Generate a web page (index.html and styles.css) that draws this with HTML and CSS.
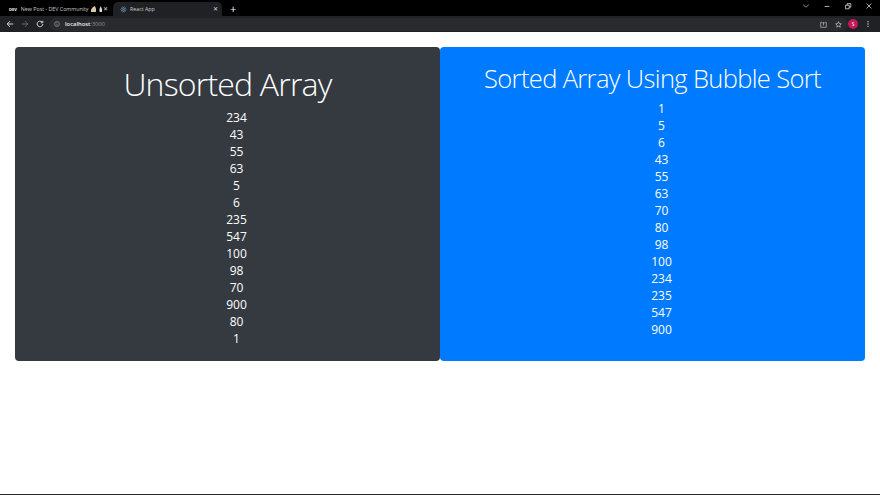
FILE: index.html
```html
<!DOCTYPE html>
<html>

<head>
  <title>React App</title>
  <meta charset="utf-8" />
  <link rel="stylesheet" href="styles.css">
</head>

<body>
<div class="tabstrip">
  <div class="tab">
    <span class="devlogo">DEV</span>
    <span class="tab-title">New Post - DEV Community</span>
    <svg class="emoji" viewBox="0 0 12 6"><path d="M0 6V3.5L2 1 4 0 5 3V6Z" fill="#d8c9a8" /><path d="M8.5 6V3L9.6 0 11 3V6Z" fill="#ddd" /></svg>
    <span class="tab-close">✕</span>
  </div>
  <div class="tab active">
    <svg class="favicon" viewBox="0 0 16 16" fill="none" stroke="#5f8fb0" stroke-width="1">
      <circle cx="8" cy="8" r="1.3" fill="#5f8fb0" stroke="none" />
      <ellipse cx="8" cy="8" rx="7" ry="2.8" />
      <ellipse cx="8" cy="8" rx="7" ry="2.8" transform="rotate(60 8 8)" />
      <ellipse cx="8" cy="8" rx="7" ry="2.8" transform="rotate(120 8 8)" />
    </svg>
    <span class="tab-title">React App</span>
    <span class="tab-close">✕</span>
  </div>
  <span class="newtab">+</span>
  <div class="window-btns">
    <svg viewBox="0 0 10 10" fill="none" stroke="#aaa"><path d="M1.5 3.5 5 6.5 8.5 3.5" /></svg>
    <svg viewBox="0 0 10 10" fill="none" stroke="#ddd"><path d="M2 5.5H8" /></svg>
    <svg viewBox="0 0 10 10" fill="none" stroke="#ddd"><path d="M2 4H6.5V8.5H2ZM4 4V2H8.5V6.5H6.5" /></svg>
    <svg viewBox="0 0 10 10" fill="none" stroke="#ddd"><path d="M2 2 8 8M8 2 2 8" /></svg>
  </div>
</div>

<div class="toolbar">
  <svg class="nav" viewBox="0 0 10 10" fill="none" stroke="#ddd" stroke-width="1.2"><path d="M9 5H1.5M5 1.5 1.5 5 5 8.5" /></svg>
  <svg class="nav" viewBox="0 0 10 10" fill="none" stroke="#6a6b6e" stroke-width="1.2"><path d="M1 5H8.5M5 1.5 8.5 5 5 8.5" /></svg>
  <svg class="nav" viewBox="0 0 10 10" fill="none" stroke="#ddd" stroke-width="1.2"><path d="M8.5 5A3.5 3.5 0 1 1 7.4 2.4M8.5 1V3.4H6" /></svg>
  <div class="omnibox">
    <svg class="info" viewBox="0 0 10 10" fill="none" stroke="#ccc" stroke-width=".8"><circle cx="5" cy="5" r="4" /><path d="M5 4.4V7.4M5 2.6V3.5" /></svg>
    <span class="host">localhost</span><span class="port">:3000</span>
    <svg class="omni-icon share" viewBox="0 0 10 10" fill="none" stroke="#ccc" stroke-width=".9"><path d="M3 2H1V9H9V2H7M5 6.5V2M3.5 3.4 5 1.6 6.5 3.4" /></svg>
    <svg class="omni-icon" viewBox="0 0 10 10" fill="none" stroke="#ddd" stroke-width=".9"><path d="M5 1 6.2 3.7 9 4 6.9 5.9 7.5 8.8 5 7.3 2.5 8.8 3.1 5.9 1 4 3.8 3.7Z" /></svg>
  </div>
  <span class="avatar">S</span>
  <svg class="menu" viewBox="0 0 4 12" fill="#ddd"><circle cx="2" cy="2.5" r="1" /><circle cx="2" cy="6" r="1" /><circle cx="2" cy="9.5" r="1" /></svg>
</div>

<div class="page">
  <div class="row">
    <div class="card card-dark">
      <div class="title-big">Unsorted Array</div>
      <ul class="list">
        <li>234</li>
        <li>43</li>
        <li>55</li>
        <li>63</li>
        <li>5</li>
        <li>6</li>
        <li>235</li>
        <li>547</li>
        <li>100</li>
        <li>98</li>
        <li>70</li>
        <li>900</li>
        <li>80</li>
        <li>1</li>
      </ul>
    </div>
    <div class="card card-blue">
      <div class="title-small">Sorted Array Using Bubble Sort</div>
      <ul class="list">
        <li>1</li>
        <li>5</li>
        <li>6</li>
        <li>43</li>
        <li>55</li>
        <li>63</li>
        <li>70</li>
        <li>80</li>
        <li>98</li>
        <li>100</li>
        <li>234</li>
        <li>235</li>
        <li>547</li>
        <li>900</li>
      </ul>
    </div>
  </div>
</div>

<div class="bottomline"></div>
</body>
</html>
```

FILE: styles.css
```css
html, body {
  margin: 0px;
  padding: 0px;
  background: #fff;
  font-family: "Open Sans", "Liberation Sans", sans-serif;
}
body {
  width: 880px;
  height: 495px;
  overflow: hidden;
  display: flex;
  flex-direction: column;
}

.tabstrip {
  height: 16px;
  background: #000;
  display: flex;
  align-items: flex-end;
  color: #ccc;
  font-size: 5.3px;
}
.tab {
  width: 112px;
  height: 14px;
  padding: 0 4px 0 9px;
  box-sizing: border-box;
  display: flex;
  align-items: center;
}
.tab.active {
  background: #202124;
  border-radius: 5px 5px 0 0;
  margin-left: 1px;
  width: 109px;
  padding-left: 7px;
}
.tab-title { white-space: nowrap; }
.tab-close { font-size: 6px; color: #ddd; margin-left: auto; }
.devlogo { font-size: 4px; font-weight: 700; color: #fff; margin-right: 4px; }
.favicon { width: 7px; height: 7px; margin-right: 3px; }
.emoji { width: 12px; height: 6px; margin-left: 2px; }
.newtab { color: #fff; font-size: 11px; line-height: 14px; margin-left: 8px; }
.window-btns {
  margin-left: auto;
  height: 14px;
  display: flex;
  align-items: flex-start;
  padding-right: 7px;
}
.window-btns svg { width: 8px; height: 8px; margin: 0 0 0 13px; }

.toolbar {
  height: 16px;
  background: #202124;
  display: flex;
  align-items: center;
}
.nav { width: 8px; height: 8px; margin-left: 6px; margin-right: 1px; }
.omnibox {
  width: 799px;
  height: 13px;
  margin-left: 4px;
  background: #292a2d;
  border-radius: 7px;
  display: flex;
  align-items: center;
  font-size: 5.8px;
}
.info { width: 6px; height: 6px; margin: 0 5px 0 5px; }
.host { color: #e8eaed; font-weight: 600; }
.port { color: #8f9296; }
.omni-icon { width: 7px; height: 7px; margin-right: 6px; }
.omni-icon.share { margin-left: auto; margin-right: 8px; }
.avatar {
  width: 10px;
  height: 10px;
  border-radius: 50%;
  background: #c2185b;
  color: #fff;
  font-size: 5px;
  line-height: 10px;
  text-align: center;
}
.menu { width: 4px; height: 8px; margin-left: 8px; }

.page { flex: 1; padding: 15px 15px 0; }
.row { display: flex; }
.card {
  flex: 1;
  height: 314px;
  box-sizing: border-box;
  border-radius: 4px;
  color: #fff;
  text-align: center;
  font-size: 12px;
  line-height: 17px;
}
.card-dark { background: #343a40; padding-top: 13px; }
.card-blue { background: #007bff; padding-top: 11px; }
.title-big { font-size: 32px; letter-spacing: -0.8px; font-weight: 300; line-height: 48px; }
.title-small { font-size: 25.5px; letter-spacing: -0.64px; font-weight: 300; line-height: 41px; }
.list { list-style: none; margin: 1px 0 0; padding: 0 0 0 18px; }
.bottomline { height: 1px; background: #2b2b2b; }
```
